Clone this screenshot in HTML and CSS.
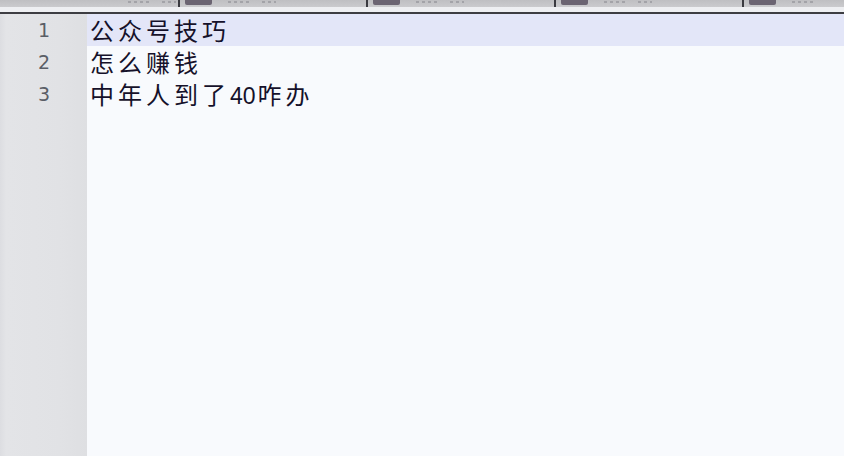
FILE: index.html
```html
<!DOCTYPE html>
<html lang="zh">
<head>
<meta charset="utf-8">
<title>Editor</title>
<link rel="stylesheet" href="styles.css">
</head>
<body>
<div class="window">
  <div class="tabs">
    <div class="tab first"><span class="tab-mark"></span><span class="tab-mark short"></span></div>
    <div class="tab"><span class="tab-icon"></span><span class="tab-mark"></span><span class="tab-mark short"></span></div>
    <div class="tab"><span class="tab-icon"></span><span class="tab-mark"></span><span class="tab-mark short"></span></div>
    <div class="tab"><span class="tab-icon"></span><span class="tab-mark"></span><span class="tab-mark short"></span></div>
    <div class="tab last"><span class="tab-icon"></span><span class="tab-mark"></span></div>
  </div>
  <div class="tab-gap"></div>
  <div class="editor">
    <div class="gutter">
      <div class="num">1</div>
      <div class="num">2</div>
      <div class="num">3</div>
    </div>
    <div class="content">
      <div class="line current">公众号技巧</div>
      <div class="line">怎么赚钱</div>
      <div class="line">中年人到了<span class="digits">40</span>咋办</div>
    </div>
  </div>
</div>
</body>
</html>
```

FILE: styles.css
```css
html, body {
  margin: 0;
  padding: 0;
  background: #f7f9fd;
}

.window {
  width: 844px;
  height: 456px;
  overflow: hidden;
  display: flex;
  flex-direction: column;
}

.tabs {
  height: 7px;
  display: flex;
  background: #c5c5c7;
  overflow: hidden;
  flex: none;
}

.tab {
  width: 188px;
  flex: none;
  box-sizing: border-box;
  display: flex;
  align-items: flex-start;
  padding-left: 5px;
  border-right: 2px solid #3a3a40;
  background: linear-gradient(#bfbfc2, #cacacd);
}

.tab.first {
  width: 180px;
  padding-left: 128px;
}

.tab.last {
  flex: 1;
  border-right: none;
}

.tab-icon {
  width: 27px;
  height: 5px;
  background: #6b6472;
  border-radius: 0 0 2px 2px;
  flex: none;
  margin-right: 16px;
}

.tab-mark {
  width: 22px;
  height: 2px;
  margin-top: 1px;
  margin-right: 12px;
  background: repeating-linear-gradient(90deg, #a3a3a8 0 3px, transparent 3px 6px);
  flex: none;
}

.tab-mark.short {
  width: 14px;
}

.tab-gap {
  height: 5px;
  background: #eeeff2;
  border-bottom: 2px solid #3d3d42;
  flex: none;
}

.editor {
  flex: 1;
  display: flex;
}

.gutter {
  width: 87px;
  flex: none;
  background: linear-gradient(90deg, #dcdde1 0px, #e3e4e7 6px, #e1e2e5 60px, #dedfe2 87px);
}

.num {
  height: 32px;
  line-height: 32px;
  text-align: center;
  font-family: "DejaVu Sans", sans-serif;
  font-size: 19px;
  color: #5a5e66;
  padding-left: 1px;
}

.content {
  flex: 1;
  background: #f8fafd;
}

.line {
  height: 32px;
  line-height: 32px;
  padding-left: 3px;
  font-family: "Noto Sans CJK SC", "Noto Sans", sans-serif;
  font-size: 24px;
  letter-spacing: 4px;
  color: #15112a;
  white-space: nowrap;
}

.line.current {
  background: #e3e6f8;
}

.digits {
  letter-spacing: 0;
  font-family: "Liberation Sans", Arial, sans-serif;
  font-size: 23px;
  margin-right: 2px;
}
```
